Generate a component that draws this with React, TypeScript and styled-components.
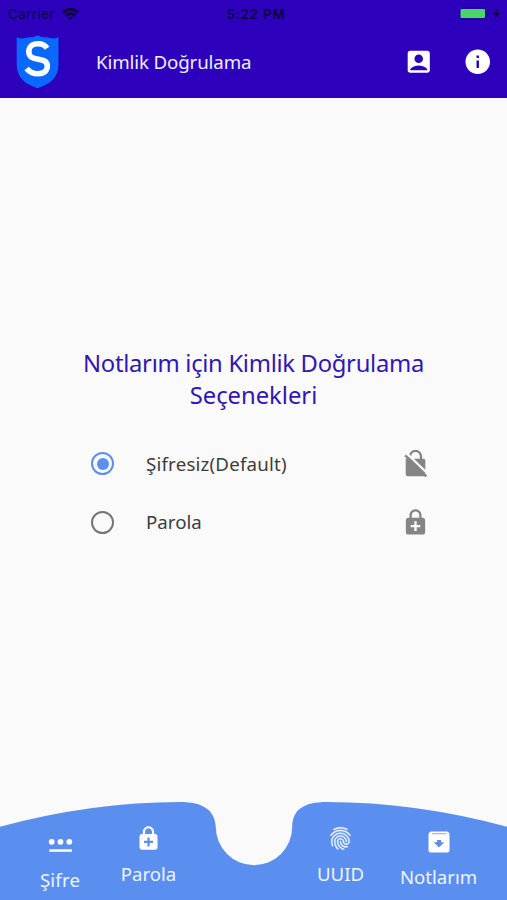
import React from 'react';
import styled, { createGlobalStyle } from 'styled-components';
import {
  MdAccountBox,
  MdEnhancedEncryption,
  MdFingerprint,
  MdInfo,
} from 'react-icons/md';

const GlobalStyle = createGlobalStyle`
  * { box-sizing: border-box; }
  body { margin: 0; background: #fafafa; }
`;

const Screen = styled.div`
  width: 507px;
  height: 900px;
  display: flex;
  flex-direction: column;
  overflow: hidden;
  background: #fafafa;
  font-family: 'Noto Sans', sans-serif;
`;

const Header = styled.header`
  height: 98px;
  flex: none;
  background: #2d00bc;
`;

const StatusBar = styled.div`
  height: 27px;
  display: grid;
  grid-template-columns: 1fr auto 1fr;
  align-items: center;
  padding: 1px 6px 0 8px;
  color: #0c0040;
  font: 13.5px/26px Inter, sans-serif;
`;

const Carrier = styled.div`
  display: flex;
  align-items: center;
  gap: 7px;
  letter-spacing: 0.4px;
`;

const Clock = styled.div`
  margin-left: 3px;
  font-size: 13.5px;
  font-weight: 600;
  letter-spacing: 0.7px;
`;

const Power = styled.div`
  display: flex;
  justify-content: flex-end;
`;

const AppBar = styled.div`
  height: 71px;
  display: flex;
  align-items: center;
  padding: 0 15px 2px 16px;
  color: #fff;
`;

const Title = styled.h1`
  margin: 0 auto 0 37px;
  font-size: 18.7px;
  font-weight: 400;
  line-height: 30px;
  letter-spacing: -0.12px;
  color: #f1edff;
`;

const IconButton = styled.button`
  display: flex;
  padding: 0;
  margin-left: 29px;
  border: 0;
  background: none;
  color: #fff;
  font-size: 29.5px;
`;

const Main = styled.main`
  flex: 1;
  padding-top: 249px;
`;

const Heading = styled.h2`
  margin: 0;
  text-align: center;
  font-size: 23.8px;
  font-weight: 400;
  line-height: 32px;
  color: #3216b4;
`;

const HeadingLine = styled.span<{ $spacing?: number }>`
  display: block;
  letter-spacing: ${(p) => p.$spacing ?? 0}px;
`;

const Options = styled.div`
  margin-top: 24px;
`;

const Option = styled.label`
  height: 58.5px;
  display: flex;
  align-items: center;
  padding: 0 77px 1px 91px;
  color: #858585;
  font-size: 29px;
`;

const Radio = styled.span<{ $checked?: boolean }>`
  width: 23px;
  height: 23px;
  display: grid;
  place-items: center;
  border: 2.5px solid ${(p) => (p.$checked ? '#5b8ff0' : '#767676')};
  border-radius: 50%;

  &::after {
    content: '';
    width: 12px;
    height: 12px;
    border-radius: 50%;
    background: ${(p) => (p.$checked ? '#5b8ff0' : 'transparent')};
  }
`;

const OptionText = styled.span<{ $spacing?: number }>`
  flex: 1;
  margin-left: 32px;
  padding-bottom: 1px;
  font-size: 18.7px;
  letter-spacing: ${(p) => p.$spacing ?? 0}px;
  color: #3d3d3d;
`;

const Nav = styled.nav`
  position: relative;
  height: 98px;
  flex: none;
`;

const Wave = styled.svg`
  position: absolute;
  inset: 0;
`;

const Tabs = styled.div`
  position: relative;
  height: 98px;
  display: grid;
  grid-template-columns: 16px 88px 89px 103px 89px 107px;
`;

const Tab = styled.div<{ $column: number; $drop: number; $gap: number }>`
  grid-row: 1;
  grid-column: ${(p) => p.$column};
  display: flex;
  flex-direction: column;
  align-items: center;
  gap: ${(p) => p.$gap}px;
  padding-top: ${(p) => p.$drop}px;
  color: #fff;
  font-size: 27px;
`;

const TabText = styled.span<{ $spacing?: number }>`
  font-size: 18.6px;
  line-height: 26px;
  letter-spacing: ${(p) => p.$spacing ?? 0}px;
  color: #eef3ff;
`;

const Fingerprint = styled(MdFingerprint)`
  stroke-width: 0.4px;
  opacity: 0.9;

  path[fill='none'] {
    stroke: none;
  }
`;

const Wifi = () => (
  <svg width="17" height="13" viewBox="0 0 17 13" fill="none" stroke="currentColor" strokeWidth="2.8">
    <path d="M1 4.4Q8.5 -1.8 16 4.4M3.8 7.7Q8.5 3.6 13.2 7.7" />
    <path d="M5.8 9.8Q8.5 7.6 11.2 9.8L8.5 12.6Z" fill="currentColor" stroke="none" />
  </svg>
);

const Battery = () => (
  <svg width="42" height="14" viewBox="0 0 42 14">
    <rect x="0.5" y="0.8" width="26.4" height="11.4" rx="3" fill="none" stroke="#1e0781" />
    <rect x="1.5" y="2" width="24.5" height="9" rx="1" fill="#4ad56b" />
    <path d="M28.5 4.7q2 1.8 0 3.6z" fill="#1e0781" />
    <path d="M39.2 1.4L33.6 7.4h3l-1 4.5 5.8-6h-3.2z" fill="#0c0040" />
  </svg>
);

const Shield = () => (
  <svg width="43" height="54" viewBox="0 0 43 54">
    <path
      d="M.7 2.2Q6 4.4 11.5 2.6Q17.8 2.7 21.6.2Q25.4 2.7 31.5 2.6Q37 4.4 42.5 2.2V29C42.5 43 34 49 21.6 53.2C9.2 49 .7 43 .7 29Z"
      fill="#0868ff"
    />
    <path
      d="M31 13.2C29 10 26 8.8 22 8.8C16 8.8 12.8 12 12.8 16.6C12.8 28.2 31.3 20.5 31.3 31C31.3 36 27.8 38.7 22 38.7C17.2 38.7 13.5 37 10.6 33.4"
      fill="none"
      stroke="#fff"
      strokeWidth="5.6"
    />
  </svg>
);

const OpenLock = () => (
  <svg width="29" height="29" viewBox="0 0 29 29">
    <path d="M9 9.5V7.4a5.5 5.5 0 0 1 11 0V12" fill="none" stroke="currentColor" strokeWidth="2.3" />
    <path d="M4.7 9.7H22.8a1.5 1.5 0 0 1 1.5 1.5V27.2H6.7a2 2 0 0 1-2-2Z" fill="currentColor" />
    <path d="M6 4.6L26.8 24.8" stroke="#fafafa" strokeWidth="2.2" />
    <path d="M4.2 6.4L25.3 27.3" stroke="currentColor" strokeWidth="2.4" />
  </svg>
);

const Pin = () => (
  <svg width="25" height="27" viewBox="0 0 25 27" fill="currentColor">
    <circle cx="3.7" cy="10.8" r="2.9" />
    <circle cx="12.5" cy="10.8" r="2.9" />
    <circle cx="21.3" cy="10.8" r="2.9" />
    <rect x="1.3" y="18.3" width="22.6" height="2.5" />
  </svg>
);

const Archive = () => (
  <svg width="28" height="28" viewBox="0 0 28 28">
    <path d="M6 3.5H22Q24.5 4 24.5 7V22a2.5 2.5 0 0 1-2.5 2.5H6A2.5 2.5 0 0 1 3.5 22V7Q3.5 4 6 3.5Z" fill="currentColor" />
    <path d="M6.8 5.7H21.2" stroke="#8fb3f6" strokeWidth="1.1" />
    <path d="M12 12H16V14.3H19.3L14 19.6L8.7 14.3H12Z" fill="#5b8fef" />
  </svg>
);

export default function App() {
  return (
    <Screen>
      <GlobalStyle />
      <Header>
        <StatusBar>
          <Carrier>
            Carrier <Wifi />
          </Carrier>
          <Clock>5:22 PM</Clock>
          <Power>
            <Battery />
          </Power>
        </StatusBar>
        <AppBar>
          <Shield />
          <Title>Kimlik Doğrulama</Title>
          <IconButton>
            <MdAccountBox />
          </IconButton>
          <IconButton>
            <MdInfo />
          </IconButton>
        </AppBar>
      </Header>
      <Main>
        <Heading>
          <HeadingLine $spacing={-0.3}>Notlarım için Kimlik Doğrulama</HeadingLine>
          <HeadingLine>Seçenekleri</HeadingLine>
        </Heading>
        <Options>
          <Option>
            <Radio $checked />
            <OptionText $spacing={0.2}>Şifresiz(Default)</OptionText>
            <OpenLock />
          </Option>
          <Option>
            <Radio />
            <OptionText>Parola</OptionText>
            <MdEnhancedEncryption />
          </Option>
        </Options>
      </Main>
      <Nav>
        <Wave width="507" height="98" viewBox="0 0 507 98">
          <path
            d="M0 24.7Q92 0 180 0C203 0 215 8 215.8 25A38.2 38.2 0 0 0 292.2 25C292.5 8 303 0 327 0Q415 0 507 24.7V98H0Z"
            fill="#5b8fef"
          />
        </Wave>
        <Tabs>
          <Tab $column={2} $drop={29} $gap={9}>
            <Pin />
            <TabText $spacing={0.2}>Şifre</TabText>
          </Tab>
          <Tab $column={3} $drop={23} $gap={9}>
            <MdEnhancedEncryption />
            <TabText>Parola</TabText>
          </Tab>
          <Tab $column={5} $drop={23} $gap={9}>
            <Fingerprint />
            <TabText>UUID</TabText>
          </Tab>
          <Tab $column={6} $drop={25.5} $gap={8}>
            <Archive />
            <TabText>Notlarım</TabText>
          </Tab>
        </Tabs>
      </Nav>
    </Screen>
  );
}
